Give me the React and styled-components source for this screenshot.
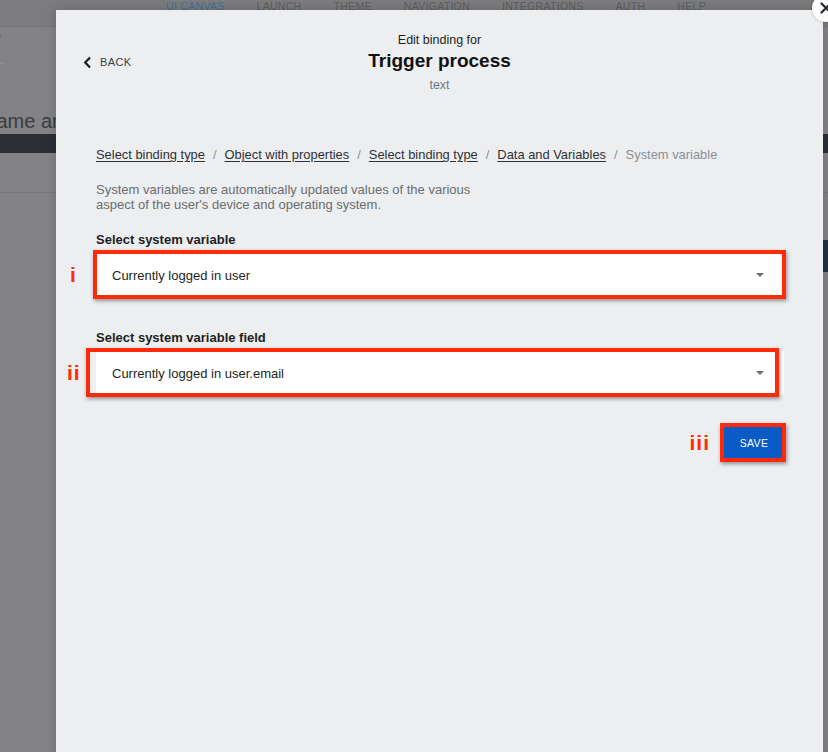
import React from 'react';
import styled, { createGlobalStyle } from 'styled-components';

const GlobalStyle = createGlobalStyle`
    html, body {
        margin: 0;
        padding: 0;
        height: 752px;
        overflow: hidden;
        font-family: "Liberation Sans", Arial, sans-serif;
    }
    #root {
        height: 100%;
    }
`;

const navItems = ['UI CANVAS', 'LAUNCH', 'THEME', 'NAVIGATION', 'INTEGRATIONS', 'AUTH', 'HELP'];

const crumbs = [
    { label: 'Select binding type', link: true },
    { label: 'Object with properties', link: true },
    { label: 'Select binding type', link: true },
    { label: 'Data and Variables', link: true },
    { label: 'System variable', link: false },
];

const App = () => {
    return (
        <>
            <GlobalStyle />
            <Page>
                {/* dimmed editor behind the dialog */}
                <NavBar>
                    {navItems.map((item, i) => (
                        <NavItem key={item} $active={i === 0}>{item}</NavItem>
                    ))}
                </NavBar>
                <SubBar>
                    <Dash>–</Dash>
                </SubBar>
                <PageHeading>Name and description</PageHeading>
                <DarkBar />
                <Rule />
                <SideTab />
            </Page>

            <Modal>
                <CloseButton aria-label="close">
                    <svg width="12" height="12" viewBox="0 0 12 12">
                        <path d="M1.5 1.5 L10.5 10.5 M10.5 1.5 L1.5 10.5" stroke="#2c3036" strokeWidth="2.4" strokeLinecap="round" />
                    </svg>
                </CloseButton>

                <Header>
                    <BackButton>
                        <svg width="9" height="13" viewBox="0 0 9 13">
                            <path d="M7 1.5 L2.2 6.5 L7 11.5" fill="none" stroke="#1b1d20" strokeWidth="2.2" />
                        </svg>
                        <span>BACK</span>
                    </BackButton>
                    <TitleBlock>
                        <Overline>Edit binding for</Overline>
                        <Title>Trigger process</Title>
                        <Subtitle>text</Subtitle>
                    </TitleBlock>
                    <div />
                </Header>

                <Content>
                    <Breadcrumbs>
                        {crumbs.map((c, i) => (
                            <React.Fragment key={i}>
                                {i > 0 && <Sep>/</Sep>}
                                {c.link ? <Crumb href="#">{c.label}</Crumb> : <Current>{c.label}</Current>}
                            </React.Fragment>
                        ))}
                    </Breadcrumbs>

                    <Description>
                        System variables are automatically updated values of the various aspect of the user's device and operating system.
                    </Description>

                    <Field $top={20}>
                        <Label>Select system variable</Label>
                        <Marked>
                            <Select>
                                <span>Currently logged in user</span>
                                <Caret />
                            </Select>
                            <Frame $l={-3} $r={-2} $t={-3} $b={-2} />
                            <Marker $left={-26}>i</Marker>
                        </Marked>
                    </Field>

                    <Field $top={33}>
                        <Label>Select system variable field</Label>
                        <Marked>
                            <Select>
                                <span>Currently logged in user.email</span>
                                <Caret />
                            </Select>
                            <Frame $l={-10} $r={5} $t={-3} $b={-2} />
                            <Marker $left={-29}>ii</Marker>
                        </Marked>
                    </Field>

                    <Actions>
                        <InlineMarker>iii</InlineMarker>
                        <Marked>
                            <SaveButton>SAVE</SaveButton>
                            <Frame $l={-4} $r={-2} $t={-4} $b={-3} />
                        </Marked>
                    </Actions>
                </Content>
            </Modal>
        </>
    );
};

const Page = styled.div`
    height: 752px;
    background: #838385;
    display: flex;
    flex-direction: column;
    overflow: hidden;
`;

const NavBar = styled.div`
    height: 26px;
    display: flex;
    gap: 32px;
    padding-left: 166px;
    background: #7c7c7e;
    border-bottom: 1px solid #737375;
`;

const NavItem = styled.span`
    font-size: 10.5px;
    letter-spacing: 0.3px;
    line-height: 11px;
    margin-top: 1px;
    color: ${(p) => (p.$active ? '#3f7396' : '#5c5e61')};
`;

const SubBar = styled.div`
    height: 36px;
    border-bottom: 1px solid #8e8e90;
    width: 5px;
`;

const Dash = styled.span`
    display: block;
    margin: 2px 0 0 -6px;
    font-size: 12px;
    color: #3b3d40;
`;

const PageHeading = styled.h1`
    margin: 44px 0 0 -18px;
    font-size: 20px;
    font-weight: 400;
    line-height: 26px;
    color: #3a3c40;
    white-space: nowrap;
`;

const DarkBar = styled.div`
    height: 19px;
    background: #2b2e33;
`;

const Rule = styled.div`
    margin-top: 39px;
    border-top: 1px solid #76777a;
`;

const SideTab = styled.div`
    align-self: flex-end;
    width: 30px;
    height: 32px;
    margin-top: 47px;
    background: #1f3346;
`;

const Modal = styled.div`
    position: absolute;
    top: 10px;
    left: 56px;
    width: 767px;
    height: 760px;
    background: #edeef0;
    box-shadow: 0 0 10px rgba(0, 0, 0, 0.18);
`;

const CloseButton = styled.button`
    position: absolute;
    top: -16px;
    right: -17px;
    width: 28px;
    height: 28px;
    border-radius: 50%;
    border: none;
    background: #fff;
    display: flex;
    align-items: center;
    justify-content: center;
    padding: 0;
    box-shadow: 0 0 3px rgba(0, 0, 0, 0.25);
`;

const Header = styled.div`
    display: grid;
    grid-template-columns: 1fr auto 1fr;
    align-items: center;
    padding: 22px 27px 0;
`;

const BackButton = styled.button`
    display: flex;
    align-items: center;
    gap: 8px;
    justify-self: start;
    background: none;
    border: none;
    padding: 0;
    margin-top: -1px;
    font-family: inherit;
    font-size: 11px;
    letter-spacing: 0.4px;
    color: #3a3e44;
`;

const TitleBlock = styled.div`
    display: flex;
    flex-direction: column;
    align-items: center;
`;

const Overline = styled.div`
    font-size: 12.5px;
    line-height: 16px;
    color: #1d1f22;
`;

const Title = styled.div`
    margin-top: 1px;
    font-size: 19px;
    font-weight: 700;
    line-height: 24px;
    color: #111;
`;

const Subtitle = styled.div`
    margin-top: 4px;
    font-size: 12.5px;
    line-height: 16px;
    color: #6d7b8f;
`;

const Content = styled.div`
    padding: 53px 39px 0 40px;
    display: flex;
    flex-direction: column;
`;

const Breadcrumbs = styled.div`
    display: flex;
    align-items: center;
    font-size: 12.9px;
    line-height: 18px;
    white-space: nowrap;
`;

const Crumb = styled.a`
    color: #2d3138;
    text-decoration: underline;
    text-underline-offset: 2px;
`;

const Current = styled.span`
    color: #8a9097;
`;

const Sep = styled.span`
    margin: 0 8px;
    color: #8a9097;
`;

const Description = styled.p`
    margin: 18px 0 0;
    max-width: 380px;
    font-size: 13px;
    line-height: 15px;
    color: #6a6d71;
`;

const Field = styled.div`
    margin-top: ${(p) => p.$top}px;
    display: flex;
    flex-direction: column;
    gap: 5px;
`;

const Label = styled.label`
    font-size: 13px;
    font-weight: 700;
    line-height: 16px;
    color: #1d1f22;
`;

const Marked = styled.div`
    position: relative;
`;

const Select = styled.div`
    height: 44px;
    background: #fff;
    display: flex;
    align-items: center;
    justify-content: space-between;
    padding: 0 20px 0 16px;
    font-size: 13px;
    color: #1d1f22;
`;

const Caret = styled.span`
    width: 0;
    height: 0;
    border-left: 4px solid transparent;
    border-right: 4px solid transparent;
    border-top: 4px solid #6b6e73;
`;

/* red annotation frames drawn over the screenshot */
const Frame = styled.div`
    position: absolute;
    left: ${(p) => p.$l}px;
    right: ${(p) => p.$r}px;
    top: ${(p) => p.$t}px;
    bottom: ${(p) => p.$b}px;
    border: 4px solid #ff2a0a;
    box-shadow: 1px 2px 4px rgba(0, 0, 0, 0.4);
    pointer-events: none;
`;

const Marker = styled.span`
    position: absolute;
    left: ${(p) => p.$left}px;
    top: 50%;
    transform: translateY(-50%);
    font-size: 21px;
    font-weight: 700;
    color: #ff2a0a;
    letter-spacing: 1px;
`;

const Actions = styled.div`
    margin-top: 32px;
    display: flex;
    justify-content: flex-end;
    align-items: center;
    gap: 14px;
`;

const InlineMarker = styled.span`
    font-size: 21px;
    font-weight: 700;
    color: #ff2a0a;
    letter-spacing: 1px;
`;

const SaveButton = styled.button`
    display: block;
    width: 60px;
    height: 32px;
    border: none;
    background: #0b5bc6;
    color: #fff;
    font-family: inherit;
    font-size: 10.5px;
    letter-spacing: 0.3px;
    padding: 0;
`;

export default App;
